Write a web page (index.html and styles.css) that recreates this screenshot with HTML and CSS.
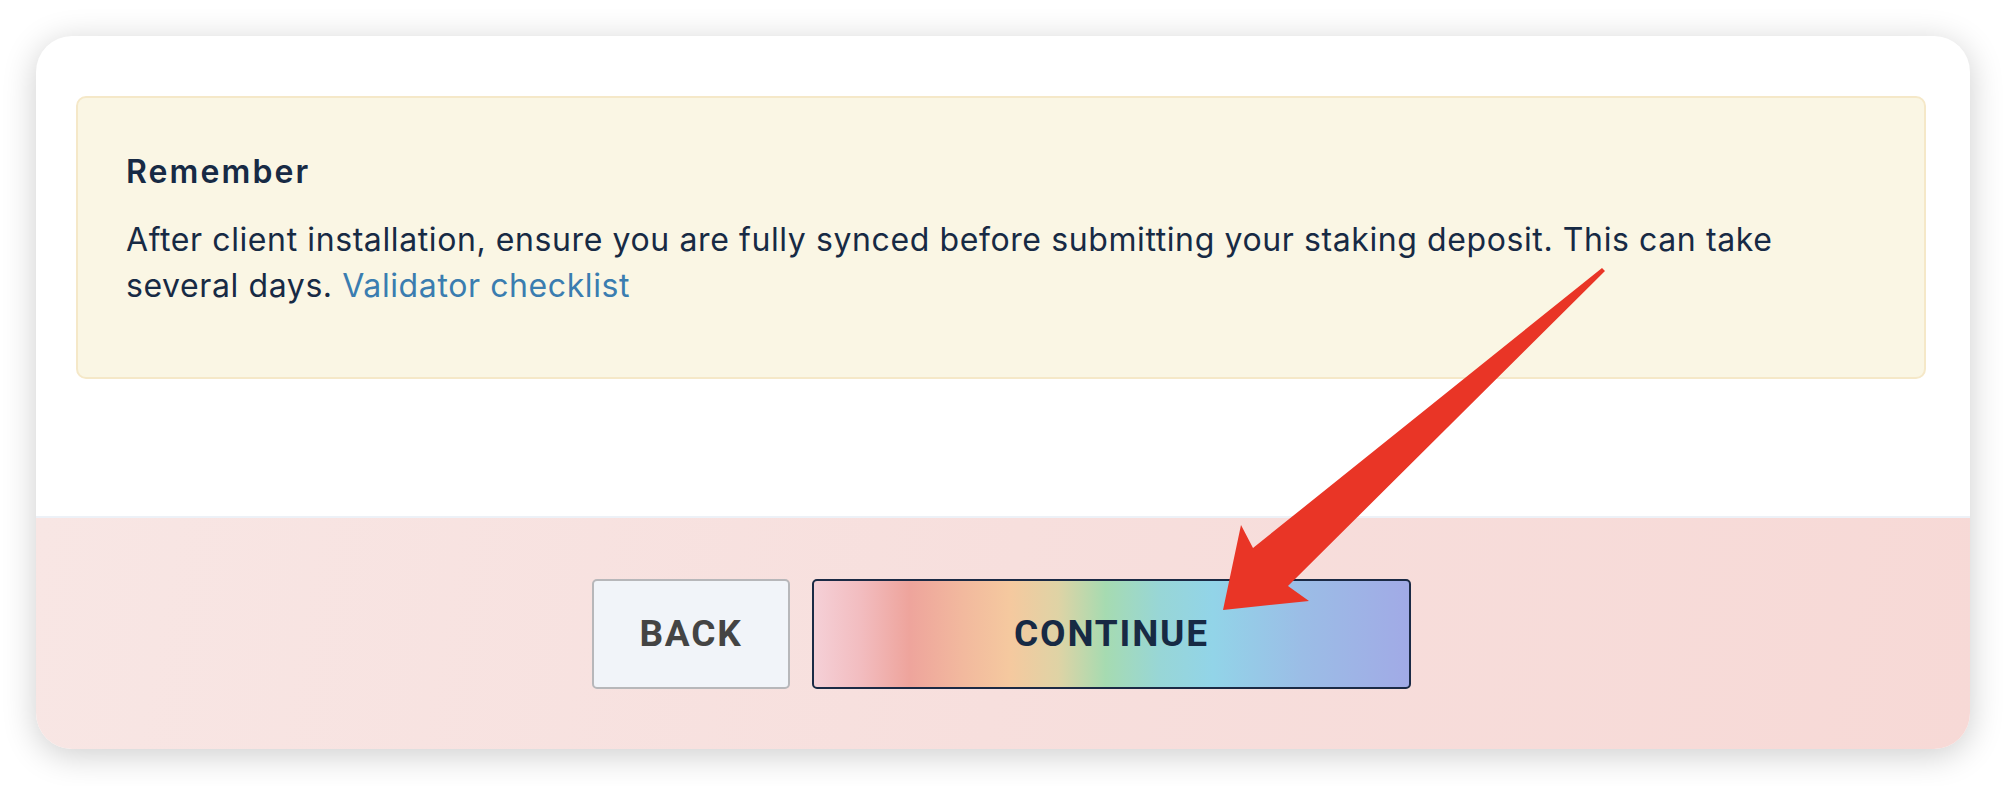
FILE: index.html
```html
<!DOCTYPE html>
<html lang="en">
<head>
<meta charset="utf-8">
<title>Remember</title>
<link rel="stylesheet" href="styles.css">
</head>
<body>
<div class="card">
  <div class="content">
    <div class="callout">
      <h3 class="callout-title">Remember</h3>
      <p class="callout-text">After client installation, ensure you are fully synced before submitting your staking deposit. This can take several days. <a class="link" href="#">Validator checklist</a></p>
    </div>
  </div>
  <div class="footer">
    <button class="btn btn-back" type="button">BACK</button>
    <button class="btn btn-continue" type="button">CONTINUE</button>
  </div>
</div>
<svg class="annotation" width="2006" height="786" viewBox="0 0 2006 786" aria-hidden="true">
  <polygon points="1602,268 1605,271 1288,586 1309,601 1223,610 1241,525 1253,548" fill="#e93526"/>
</svg>
</body>
</html>
```
FILE: styles.css
```css
html, body {
  margin: 0;
  background: #ffffff;
}
body {
  padding: 36px 36px 0 36px;
  font-family: "Inter", "Noto Sans", sans-serif;
  color: #172a44;
  position: relative;
  height: 786px;
  box-sizing: border-box;
  overflow: hidden;
}
.card {
  background: #ffffff;
  border-radius: 36px;
  box-shadow: 0 6px 34px rgba(0, 0, 0, 0.2);
  overflow: hidden;
}
.content {
  height: 480px;
  box-sizing: border-box;
  padding: 60px 44px 0 40px;
}
.callout {
  background: #faf6e4;
  border: 2px solid #f5e8c8;
  border-radius: 10px;
  height: 283px;
  box-sizing: border-box;
  padding: 51px 48px 0 48px;
}
.callout-title {
  margin: 0 0 21px 0;
  font-size: 32px;
  line-height: 46.5px;
  font-weight: 600;
  letter-spacing: 2.1px;
  color: #172a44;
}
.callout-text {
  margin: 0;
  font-size: 32px;
  line-height: 46.5px;
  font-weight: 400;
  letter-spacing: 0.6px;
  color: #172a44;
}
.link {
  color: #3a7db0;
  text-decoration: none;
}
.footer {
  border-top: 2px solid #edf1f7;
  height: 231px;
  background: linear-gradient(100deg, #f8e6e4 0%, #f7dfdd 50%, #f7d9d6 100%);
  display: flex;
  justify-content: center;
  align-items: center;
  gap: 22px;
  padding-right: 3px;
}
.btn {
  height: 110px;
  box-sizing: border-box;
  border-radius: 5px;
  font-family: "Roboto", "Liberation Sans", sans-serif;
  font-weight: 700;
  font-size: 37px;
  letter-spacing: 1.8px;
  padding: 0;
  cursor: pointer;
}
.btn-back {
  width: 198px;
  background: #f1f4f9;
  border: 2px solid #b7b7ba;
  color: #444444;
}
.btn-continue {
  width: 599px;
  border: 2px solid #1b2a45;
  color: #172a44;
  background: linear-gradient(90deg,
    #f5d0d7 0%,
    #f2bcbf 8%,
    #eea49c 16%,
    #f2b99e 25%,
    #f5c99f 33%,
    #dfd3a5 41%,
    #a6dbb1 49%,
    #98d6d6 58%,
    #92d4e8 67%,
    #9bbde6 82%,
    #a1aae6 100%);
}
.annotation {
  position: absolute;
  left: 0;
  top: 0;
  pointer-events: none;
}
```
